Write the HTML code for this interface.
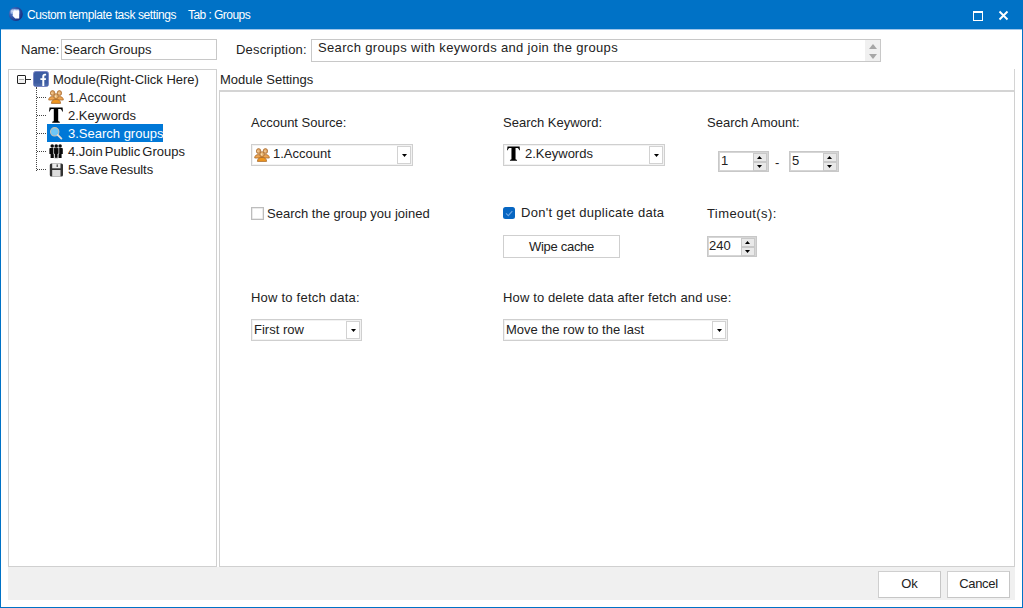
<!DOCTYPE html>
<html><head><meta charset="utf-8">
<style>
*{box-sizing:border-box;margin:0;padding:0}
html,body{width:1023px;height:608px;overflow:hidden;background:#fff;font-family:"Liberation Sans",sans-serif;font-size:13px;color:#222}
.abs{position:absolute}
#win{position:absolute;left:0;top:0;width:1023px;height:608px;border:1px solid #0072c6;border-top:none;background:#fff}
#title{position:absolute;left:0;top:0;width:1023px;height:29px;background:#0072c6;color:#fff;font-size:11px}
.t{position:absolute;white-space:nowrap;line-height:16px}
.inp{position:absolute;border:1px solid #c8c8c8;background:#fff}
#tree{position:absolute;left:8px;top:69px;width:209px;height:498px;border:1px solid #d0d0d0;background:#fff}
#rp{position:absolute;left:219px;top:90px;width:796px;height:477px;border:1px solid #d0d0d0;border-top:2px solid #d4d4d4;background:#fff}
#bar{position:absolute;left:8px;top:567px;width:1007px;height:33px;background:#f0f0f0}
.btn{position:absolute;border:1px solid #cfcfcf;background:#fff;text-align:center}
.combo{position:absolute;border:1px solid #cfcfcf;box-shadow:inset 0 0 0 1px #f2f2f2;background:#fff;height:22px}
.dd{position:absolute;right:1px;top:1px;width:14px;height:18px;border:1px solid #d2d2d2;background:#fff}
.dd:after{content:"";position:absolute;left:4px;top:7px;width:5px;height:3px;background:#000;clip-path:polygon(0 0,100% 0,50% 100%)}
.spin{position:absolute;height:21px;border:1px solid #c8c8c8;box-shadow:inset 0 0 0 1px #d6d6d6;background:#fff}
.sb{position:absolute;right:1px;top:1px;width:14px;height:18px;background:#c9c9c9}
.sb i{position:absolute;left:1px;width:12px;height:7px;background:#e9e9e9}
.sb i.up{top:1px}.sb i.dn{top:10px}
.sb i:after{content:"";position:absolute;left:3px;top:2px;width:5px;height:3px;background:#000}
.sb i.up:after{clip-path:polygon(50% 0,100% 100%,0 100%)}
.sb i.dn:after{clip-path:polygon(0 0,100% 0,50% 100%)}
</style></head><body>
<div id="win"></div>
<div id="title">
  <div class="t" style="left:27px;top:7px;font-size:12px;letter-spacing:-0.4px">Custom template task settings</div><div class="t" style="left:188px;top:7px;font-size:12px;letter-spacing:-0.55px">Tab : Groups</div>
</div>

<!-- title icon -->
<svg class="abs" style="left:8px;top:6px" width="16" height="16" viewBox="0 0 16 16">
 <defs><radialGradient id="tg" cx="0.3" cy="0.35" r="0.75"><stop offset="0" stop-color="#5f8ad2"/><stop offset="0.55" stop-color="#2f52a6"/><stop offset="1" stop-color="#182c7c"/></radialGradient></defs>
 <circle cx="7.8" cy="8" r="7" fill="url(#tg)"/>
 <path d="M2.6 4.4L4 3.2H10.6L11.2 4V8H6L2.6 7.4z" fill="#a3bde8"/>
 <path d="M5.4 4.6L7 4.2L8.4 4.6L10 4.2L11.2 4.8V12.4H7.2L4.6 9.8L5 7z" fill="#fbfdff"/>
 <path d="M3.6 5.2h1.2M6.8 3.6v1.4" stroke="#e8f0ff" stroke-width="0.9"/>
</svg>
<!-- max / close -->
<div class="abs" style="left:973px;top:11px;width:10px;height:10px;border:1px solid #fff;border-top:2px solid #fff"></div>
<svg class="abs" style="left:998px;top:10px" width="11" height="11" viewBox="0 0 11 11"><path d="M1.5 1.5l8 8M9.5 1.5l-8 8" stroke="#fff" stroke-width="1.9"/></svg>
<div class="abs" style="left:1px;top:29px;width:1021px;height:1px;background:#9fc6ea"></div>

<div class="t" style="left:21px;top:42px">Name:</div>
<div class="inp" style="left:61px;top:39px;width:156px;height:21px"><span class="t" style="left:2px;top:2px">Search Groups</span></div>
<div class="t" style="left:236px;top:42px;letter-spacing:0.18px">Description:</div>
<div class="inp" style="left:311px;top:39px;width:570px;height:23px"><span class="t" style="left:6px;top:0px;letter-spacing:0.34px">Search groups with keywords and join the groups</span></div>
<div class="abs" style="left:865px;top:40px;width:15px;height:21px;background:#f0f0f0"></div>
<div class="abs" style="left:869px;top:44px;width:8px;height:5px;background:#a6a6a6;clip-path:polygon(50% 0,100% 100%,0 100%)"></div>
<div class="abs" style="left:869px;top:54px;width:8px;height:5px;background:#a6a6a6;clip-path:polygon(0 0,100% 0,50% 100%)"></div>

<div id="tree"></div>
<!-- tree -->

<div class="abs" style="left:17px;top:75px;width:9px;height:9px;border:1px solid #222;border-radius:1px;background:linear-gradient(#fff,#ececec)"></div>
<div class="abs" style="left:19px;top:79px;width:5px;height:1px;background:#aaa"></div>
<div class="abs" style="left:26px;top:79px;width:5px;height:1px;background:#333"></div>
<div class="abs" style="left:36px;top:87px;width:1px;height:84px;border-left:1px dotted #444"></div>
<div class="abs" style="left:37px;top:97px;width:9px;border-top:1px dotted #444"></div>
<div class="abs" style="left:37px;top:115px;width:9px;border-top:1px dotted #444"></div>
<div class="abs" style="left:37px;top:133px;width:9px;border-top:1px dotted #444"></div>
<div class="abs" style="left:37px;top:151px;width:9px;border-top:1px dotted #444"></div>
<div class="abs" style="left:37px;top:169px;width:9px;border-top:1px dotted #444"></div>
<svg class="abs" style="left:33px;top:71px" width="16" height="16" viewBox="0 0 16 16">
 <rect x="0.5" y="0.5" width="15" height="15" rx="2.2" fill="#3d5ca2" stroke="#7a86c4" stroke-width="1"/>
 <rect x="1" y="12.5" width="14" height="2.5" fill="#4a68aa"/>
 <path d="M9.3 15V9.1H7.4V7.2h1.9V5.6c0-1.8 1-2.8 2.7-2.8.6 0 1 .1 1.1.1v1.7h-.8c-.8 0-1 .4-1 1.1v1.5h1.8l-.3 1.9h-1.5V15z" fill="#fff"/>
</svg>
<div class="t" style="left:53px;top:72px">Module(Right-Click Here)</div>
<svg class="abs" style="left:48px;top:89px" width="16" height="15" viewBox="0 0 16 15">
 <g stroke="#a86a2c" stroke-width="0.8">
 <ellipse cx="4.6" cy="4.1" rx="2.2" ry="2.5" fill="#e2a868"/>
 <ellipse cx="11.4" cy="4.1" rx="2.2" ry="2.5" fill="#e2a868"/>
 <path d="M0.7 11c0-2.4 1.6-3.4 3.8-3.4s3.8 1 3.8 3.4z" fill="#eda552"/>
 <path d="M7.7 11c0-2.4 1.6-3.4 3.8-3.4s3.8 1 3.8 3.4z" fill="#eda552"/>
 <ellipse cx="8" cy="7.3" rx="2.2" ry="2.6" fill="#eab878"/>
 <path d="M3.4 14.4c0-2.8 2-4 4.6-4s4.6 1.2 4.6 4z" fill="#f0961e"/>
 </g>
 <path d="M4 3.4v1.6M11 3.4v1.6M7.6 6.6v1.6" stroke="#fbe6c0" stroke-width="0.9"/>
</svg>
<div class="t" style="left:68px;top:90px">1.Account</div>
<svg class="abs" style="left:49px;top:107px" width="14" height="16" viewBox="0 0 14 16" preserveAspectRatio="none">
 <path d="M0.5 0.4H13.6L13.9 4.6H13.1C12.7 2.6 12 2.1 10.4 2.1H9.2V13.6C9.2 14.4 9.6 14.6 10.8 14.7V15.8H3.2V14.7C4.4 14.6 4.8 14.4 4.8 13.6V2.1H3.6C2 2.1 1.3 2.6 0.9 4.6H0.1z" fill="#000"/>
</svg>
<div class="t" style="left:68px;top:108px">2.Keywords</div>
<div class="abs" style="left:47px;top:124px;width:116px;height:18px;background:#0078d7"></div>
<svg class="abs" style="left:49px;top:126px" width="15" height="15" viewBox="0 0 15 15">
 <circle cx="5.7" cy="5.8" r="4.2" fill="#6ec6f6" stroke="#c9c0b0" stroke-width="1.1"/>
 <path d="M8.8 9l3.6 3.6" stroke="#e4e0da" stroke-width="1.8" stroke-linecap="round"/>
</svg>
<div class="t" style="left:68px;top:126px;color:#fff">3.Search groups</div>
<svg class="abs" style="left:48px;top:144px" width="16" height="15" viewBox="0 0 16 15">
 <g fill="#0a0a0a">
 <circle cx="4.2" cy="2.1" r="1.75"/><circle cx="12.1" cy="2.1" r="1.75"/>
 <path d="M1.4 5c0-.6.4-1 1-1h3.4v10H2.6V10H1.4z"/>
 <path d="M10.4 4h3.4c.6 0 1 .4 1 1v5h-1.2v4H10.4z"/>
 <path d="M5.6 4.4c0-.5.3-.8.8-.8h3.6c.5 0 .8.3.8.8V10h-.9v4.2H6.5V10h-.9z" stroke="#fff" stroke-width="0.6"/>
 <circle cx="8.2" cy="2" r="1.75"/>
 </g>
</svg>
<div class="t" style="left:68px;top:144px;word-spacing:-1.5px">4.Join Public Groups</div>
<svg class="abs" style="left:49px;top:163px" width="15" height="15" viewBox="0 0 15 15">
 <rect x="0.8" y="0.5" width="13.2" height="13" rx="1.5" fill="#333"/>
 <rect x="3.2" y="0.5" width="8.3" height="4.8" fill="#ececec"/>
 <rect x="7.6" y="1.4" width="1.2" height="2.6" fill="#444"/>
 <rect x="3.2" y="7" width="8.3" height="6.5" fill="#dcdcdc"/>
</svg>
<div class="t" style="left:68px;top:162px;letter-spacing:-0.1px;word-spacing:-1px">5.Save Results</div>
<div class="t" style="left:220px;top:72px">Module Settings</div>
<div class="abs" style="left:1014px;top:69px;width:1px;height:22px;background:#d4d4d4"></div>
<div id="rp"></div>
<!-- settings -->
<div class="t" style="left:251px;top:115px">Account Source:</div>
<div class="combo" style="left:251px;top:144px;width:162px">
 <svg class="abs" style="left:2px;top:2px" width="16" height="15" viewBox="0 0 16 15">
 <g stroke="#a86a2c" stroke-width="0.8">
 <ellipse cx="4.6" cy="4.1" rx="2.2" ry="2.5" fill="#e2a868"/>
 <ellipse cx="11.4" cy="4.1" rx="2.2" ry="2.5" fill="#e2a868"/>
 <path d="M0.7 11c0-2.4 1.6-3.4 3.8-3.4s3.8 1 3.8 3.4z" fill="#eda552"/>
 <path d="M7.7 11c0-2.4 1.6-3.4 3.8-3.4s3.8 1 3.8 3.4z" fill="#eda552"/>
 <ellipse cx="8" cy="7.3" rx="2.2" ry="2.6" fill="#eab878"/>
 <path d="M3.4 14.4c0-2.8 2-4 4.6-4s4.6 1.2 4.6 4z" fill="#f0961e"/>
 </g>
 <path d="M4 3.4v1.6M11 3.4v1.6M7.6 6.6v1.6" stroke="#fbe6c0" stroke-width="0.9"/>
</svg>
 <span class="t" style="left:21px;top:1px">1.Account</span>
 <div class="dd"></div>
</div>
<div class="t" style="left:503px;top:115px">Search Keyword:</div>
<div class="combo" style="left:503px;top:144px;width:162px">
 <svg class="abs" style="left:3px;top:1px" width="13" height="15" viewBox="0 0 14 16" preserveAspectRatio="none">
 <path d="M0.5 0.4H13.6L13.9 4.6H13.1C12.7 2.6 12 2.1 10.4 2.1H9.2V13.6C9.2 14.4 9.6 14.6 10.8 14.7V15.8H3.2V14.7C4.4 14.6 4.8 14.4 4.8 13.6V2.1H3.6C2 2.1 1.3 2.6 0.9 4.6H0.1z" fill="#000"/>
</svg>
 <span class="t" style="left:21px;top:1px">2.Keywords</span>
 <div class="dd"></div>
</div>
<div class="t" style="left:707px;top:115px">Search Amount:</div>
<div class="spin" style="left:718px;top:151px;width:51px"><span class="t" style="left:2px;top:1px">1</span><div class="sb"><i class="up"></i><i class="dn"></i></div></div>
<div class="t" style="left:775px;top:155px">-</div>
<div class="spin" style="left:789px;top:151px;width:50px"><span class="t" style="left:2px;top:1px">5</span><div class="sb"><i class="up"></i><i class="dn"></i></div></div>

<div class="abs" style="left:251px;top:207px;width:13px;height:13px;border:1px solid #bdbdbd;box-shadow:inset 0 0 0 0.5px #d8d8d8;background:#fff"></div>
<div class="t" style="left:267px;top:206px">Search the group you joined</div>
<div class="abs" style="left:503px;top:207px;width:12px;height:12px;border-radius:2.5px;background:#0766c2"><svg class="abs" style="left:0;top:0" width="12" height="12" viewBox="0 0 12 12"><path d="M3 6.3l2.3 2.3 4-4.4" fill="none" stroke="#6ea6e4" stroke-width="1.1"/></svg></div>
<div class="t" style="left:521px;top:205px;letter-spacing:0.3px">Don't get duplicate data</div>
<div class="btn" style="left:503px;top:235px;width:117px;height:23px;line-height:21px;letter-spacing:-0.3px">Wipe cache</div>
<div class="t" style="left:707px;top:206px;letter-spacing:0.4px">Timeout(s):</div>
<div class="spin" style="left:707px;top:236px;width:50px"><span class="t" style="left:1px;top:1px">240</span><div class="sb"><i class="up"></i><i class="dn"></i></div></div>

<div class="t" style="left:251px;top:290px;letter-spacing:0.22px">How to fetch data:</div>
<div class="combo" style="left:251px;top:319px;width:111px"><span class="t" style="left:2px;top:2px">First row</span><div class="dd"></div></div>
<div class="t" style="left:503px;top:290px;letter-spacing:0.13px">How to delete data after fetch and use:</div>
<div class="combo" style="left:503px;top:319px;width:225px"><span class="t" style="left:2px;top:2px">Move the row to the last</span><div class="dd"></div></div>

<div id="bar"></div>
<div class="btn" style="left:878px;top:571px;width:63px;height:27px;line-height:23px;border-right-color:#c6c6c6;border-bottom-color:#c6c6c6">Ok</div>
<div class="btn" style="left:947px;top:571px;width:63px;height:27px;line-height:23px;letter-spacing:-0.3px;border-right-color:#c6c6c6;border-bottom-color:#c6c6c6">Cancel</div>
</body></html>
